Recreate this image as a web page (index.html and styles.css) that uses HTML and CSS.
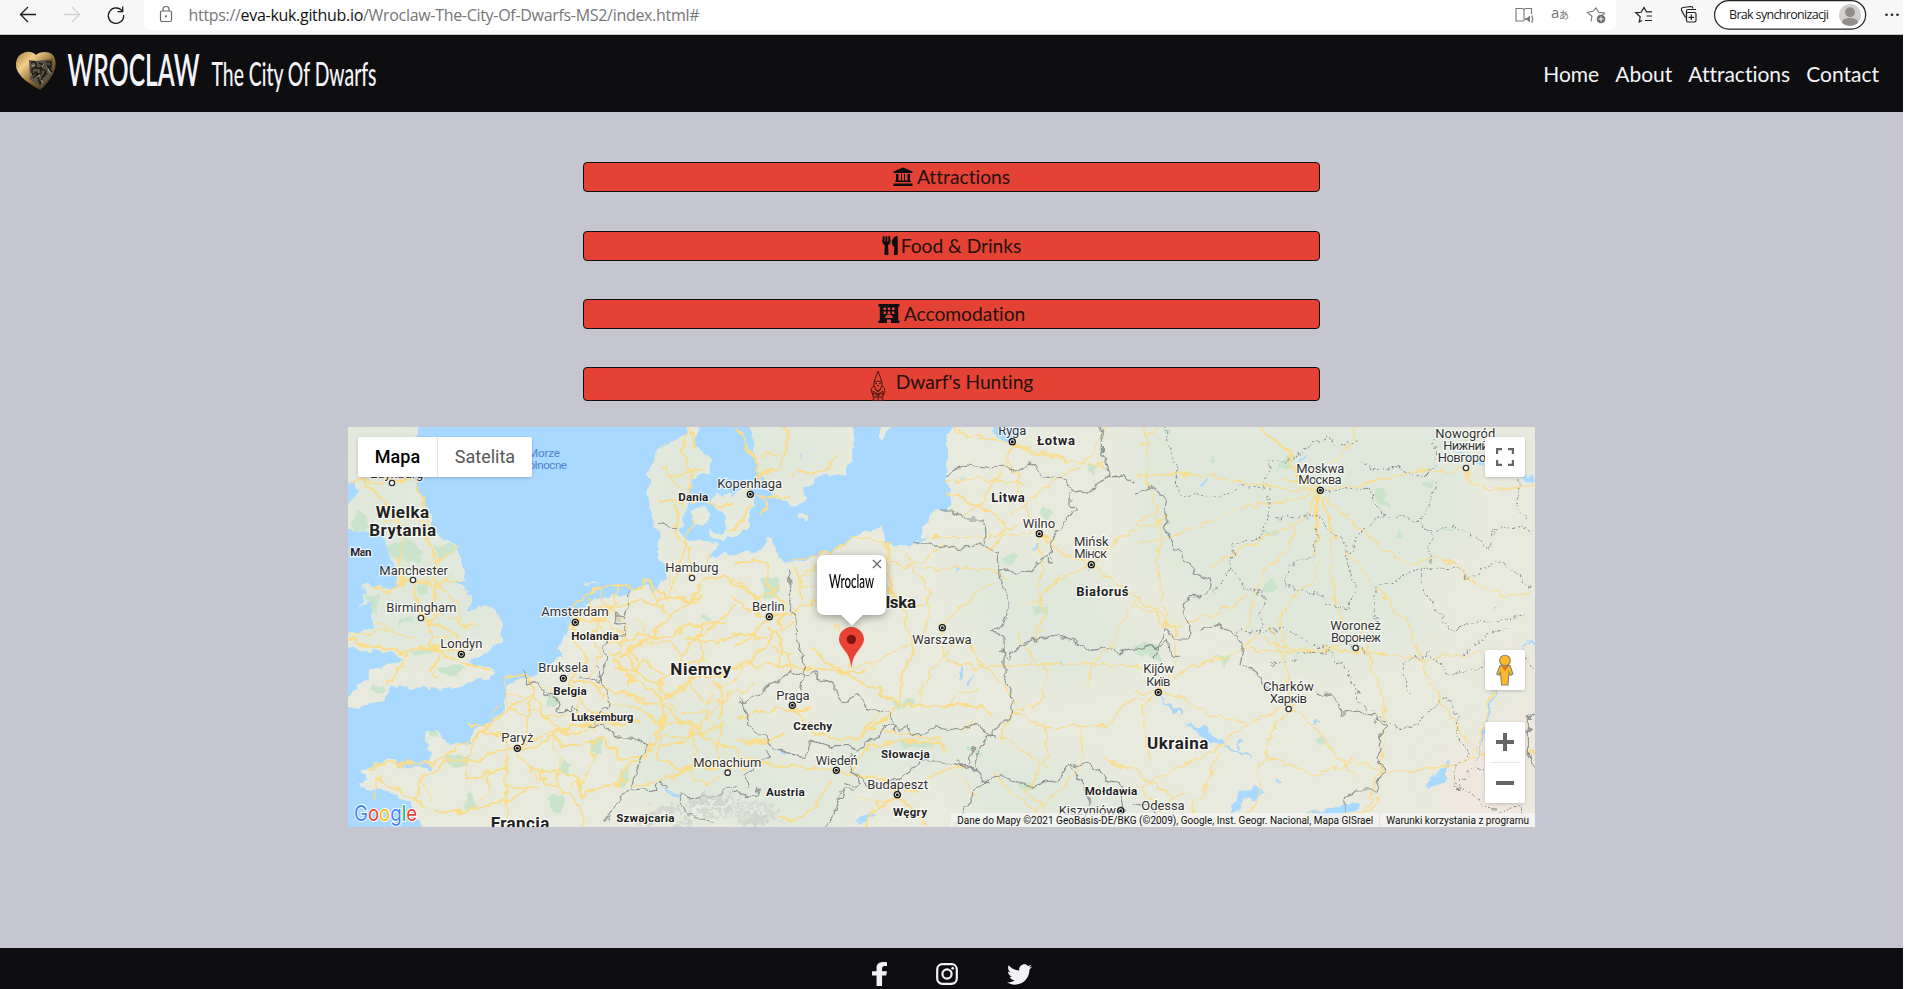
FILE: index.html
```html
<!DOCTYPE html>
<html lang="en">
<head>
<meta charset="utf-8">
<title>Wroclaw The City Of Dwarfs</title>
<link rel="stylesheet" href="styles.css">
</head>
<body>
<div class="browser">
  <svg class="browser-nav" width="144" height="34" viewBox="0 0 144 34" fill="none" stroke="#1b1b1b" stroke-width="1.3">
    <path d="M36 14.5H20.5M28 7l-7.5 7.5L28 22"/>
    <path d="M64 14.5h15.500M72 7l7.500 7.500L72 22" stroke="#cfcfcf"/>
    <path d="M122.500 11.500A7.700 7.700 0 1 0 123.700 15M122.700 6.500v5.200h-5.200"/>
  </svg>
  <div class="address">
    <svg width="1476" height="30" viewBox="144 0 1476 30">
      <g fill="none" stroke="#666" stroke-width="1.200"><rect x="160.500" y="11" width="11" height="10.500" rx="1.500"/><path d="M163 11V9a3 2.500 0 0 1 6 0v2"/></g>
      <circle cx="166" cy="16.300" r="1" fill="#555"/>
      <text class="url" x="188.500" y="21" textLength="511">https://<tspan class="url-host">eva-kuk.github.io</tspan>/Wroclaw-The-City-Of-Dwarfs-MS2/index.html#</text>
      <g fill="none" stroke="#767676" stroke-width="1.100"><path d="M1523.500 21h-7.500V8.500h6q2 0 2 2V21M1524 10.500q0-2 2-2h5.500V14"/><path d="M1591 21.500l1-5.200-4.700-4 5.700-1L1596 8l2.500 4.300 6 .8-3 3"/></g>
      <path d="M1525 18h2l3-2.500v7l-3-2.500h-2z" fill="#767676"/><path d="M1531.500 16q2 3 0 6M1532 15q2 4 0 8" fill="none" stroke="#767676" stroke-width=".8"/>
      <text class="translate" x="1551" y="18">a</text><text class="translate kana" x="1559" y="19">あ</text>
      <circle cx="1601" cy="19" r="4.300" fill="#6b6b6b"/><path d="M1598.500 19h5M1601 16.500v5" stroke="#fff"/>
    </svg>
  </div>
  <svg class="browser-tools" width="285" height="34" viewBox="1620 0 285 34" fill="none" stroke="#222" stroke-width="1.200">
    <path d="M1642 20.500l-2.700 1.400.9-5.200-4.500-3.900 5.400-.5L1644 7.500l2.500 4.300h5.500M1646.500 16h5.500M1645 20.500h7"/>
    <path d="M1685.500 17.500q-3-5-4-7.500-.5-2 1.500-2.500l8-1q1.700 0 2 1.800M1686.500 18.500V11q0-1.500 1.500-1.500h8"/>
    <rect x="1686.500" y="12.500" width="9.500" height="9.500" rx="1.500" fill="#f7f7f7"/><path d="M1688.500 17.300h5.500M1691.300 14.500V20"/>
    <rect class="pill" x="1714.600" y=".6" width="151" height="28.500" rx="14.200"/>
    <circle cx="1850" cy="15" r="11" fill="#d2d0ce" stroke="none"/><circle cx="1850" cy="12.300" r="5" fill="#918e8b" stroke="none"/><path d="M1842 23q0-5 8-5t8 5q-4 3-8 3t-8-3z" fill="#918e8b" stroke="none"/>
    <g fill="#222" stroke="none"><circle cx="1886.500" cy="14.800" r="1.300"/><circle cx="1892" cy="14.800" r="1.300"/><circle cx="1897.500" cy="14.800" r="1.300"/></g>
    <text class="sync" x="1729" y="19" textLength="100">Brak synchronizacji</text>
  </svg>
</div>

<header class="site-header">
  <svg class="brand" width="390" height="77" viewBox="0 35 390 77">
    <defs>
      <linearGradient id="gold" x1="0" y1="0" x2="1" y2="1"><stop offset="0" stop-color="#a77c3d"/><stop offset=".28" stop-color="#f0cf8c"/><stop offset=".55" stop-color="#94713d"/><stop offset="1" stop-color="#15100a"/></linearGradient>
    </defs>
    <path d="M36 55q-4-4-10-3-9 2-10 11-1 9 10 18 7 5 14 9 8-6 13-16 4-9 2-15-2-7-10-7-6 0-9 3z" fill="url(#gold)"/>
    <path d="M29 60l7 1 17-2-1 15-11 14-11-9z" fill="#5a5446"/>
    <path d="M31 63q4-3 5 1t-4 5v6l4-3 3 8M39 63l5 2-4 3 6 3-3 6 4-4M46 62h5v5l-4-2 5 7M33 78l4-4 3 10 3-9M36 69q4-3 5 2t-4 2" fill="none" stroke="#1f1c17" stroke-width="1.500"/>
    <path d="M32 66l3-1M37 77l3-2M42 67l2-3M48 69l2 4M41 80l2 3M31 73v3" stroke="#b5aa8d" stroke-width="1"/>
    <text class="logo-main" x="67.500" y="86" textLength="132" lengthAdjust="spacingAndGlyphs">WROCLAW</text>
    <text class="logo-sub" x="211.500" y="85.500" textLength="165" lengthAdjust="spacingAndGlyphs">The City Of Dwarfs</text>
  </svg>
  <nav class="menu"><a>Home</a><a>About</a><a>Attractions</a><a>Contact</a></nav>
</header>

<main class="content">
  <div class="filters">
    <button class="filter"><svg width="20" height="20" viewBox="0 0 20 20"><path d="M10 0.500L19.500 4.500V6H.5V4.500zM3 7h2.500v6.500h2.500V7h1v6.500h2V7h1v6.500h2.500V7H17v6.500h.8V15H2.200v-1.500H3zM.5 16.500h19v2.500H.5z"/></svg><span>Attractions</span></button>
    <button class="filter food"><svg width="16" height="19" viewBox="0 0 416 512"><path d="M207.900 15.200c.8 4.700 16.100 94.500 16.100 128.800 0 52.300-27.800 89.600-68.900 104.600L168 486.700c.7 13.700-10.200 25.300-24 25.300H80c-13.700 0-24.700-11.500-24-25.300l12.900-238.100C27.700 233.600 0 196.200 0 144 0 109.600 15.300 19.900 16.100 15.200 19.300-5.100 61.400-5.400 64 16.300v141.200c1.300 3.400 15.100 3.200 16 0 1.400-25.300 7.900-139.200 8-141.800 3.300-20.800 44.700-20.800 47.900 0 .2 2.700 6.600 116.500 8 141.800.9 3.200 14.800 3.400 16 0V16.300c2.600-21.600 44.800-21.400 48-1.100zm119.200 285.700l-15 185.100c-1.200 14 9.900 26 23.900 26h56c13.300 0 24-10.700 24-24V24c0-13.200-10.700-24-24-24-82.500 0-221.400 178.500-64.900 300.900z"/></svg><span>Food &amp; Drinks</span></button>
    <button class="filter hotel"><svg width="22" height="19" viewBox="0 0 22 19"><path fill-rule="evenodd" d="M.5 0h21v2.500h-1.300v14h1.300V19H13v-3.500H9V19H.5v-2.500h1.300v-14H.5zM5.500 3.500v2.500H8V3.500zm4.200 0v2.500h2.600V3.500zm4.300 0v2.500h2.500V3.500zm-8.500 4v2.500H8V7.500zm4.200 0v2.500h2.600V7.500zm4.300 0v2.500h2.500V7.500zM7 14h8q-.5-3.500-4-3.500T7 14z"/></svg><span>Accomodation</span></button>
    <button class="filter dwarf"><svg width="16" height="31" viewBox="0 0 16 31" fill="none" stroke="#4a1712" stroke-width="1"><path d="M4 12L8 1l4 11q-4-2-8 0zM4 12v3q1 5 4 6 3-1 4-6v-3M5 13.500h2M9 13.500h2M7 15.500h2M4 16q-3 1-3 5l2 4M12 16q3 1 3 5l-2 4M3 21l5 3 5-3M3 21v6h10v-6M2 24h12M8 24v6M4 27v2l-2 1.500h5.500M12 27v2l2 1.500H8.500M5 19l3 3 3-3M6 25h4"/></svg><span>Dwarf's Hunting</span></button>
  </div>

  <section class="map">
    <svg class="map-canvas" width="1187" height="400" viewBox="24 21 3561 1200">
      <defs>
        <filter id="natural" filterUnits="userSpaceOnUse" x="0" y="0" width="3600" height="1240" color-interpolation-filters="sRGB"><feTurbulence type="fractalNoise" baseFrequency=".03" numOctaves="2" seed="4" result="n"/><feDisplacementMap in="SourceGraphic" in2="n" scale="34" xChannelSelector="R" yChannelSelector="G"/></filter>
        <filter id="soft" x="-10%" y="-10%" width="120%" height="120%"><feGaussianBlur stdDeviation="30"/></filter>
        <filter id="relief" filterUnits="userSpaceOnUse" x="700" y="1050" width="800" height="250" color-interpolation-filters="sRGB"><feGaussianBlur stdDeviation="3" result="b"/><feTurbulence type="fractalNoise" baseFrequency=".05" numOctaves="2" seed="9"/><feDisplacementMap in="b" scale="80" xChannelSelector="R" yChannelSelector="G"/></filter>
      </defs>
      <rect x="24" y="21" width="3561" height="1200" fill="#e7eadc"/>
      <!-- terrain tints -->
      <g fill="#e0e8dc" filter="url(#soft)">
        <path d="M24 21h210v180l80 160 170 200v80l-200 50-260-20z"/>
        <path d="M1190 21h310l-30 140-130 60-100-20zM930 50h180v260l-160 40zM1850 400l400 60 160 260-300 70-200-160z"/>
        <path d="M2385 21h1000v300l-200 220 100 100-400 100-300-200-200-120zM840 820l400 60 120 220-300 100-160-100zM1200 1110l270-60 30 170h-300zM1480 900l360 40 30 90-380 60zM1900 970l300 70 300 170h-620z"/>
        <path d="M3280 1020l120-60 185-140v400h-260zM3440 720l145-60v160z" fill="#f0e8df"/>
      </g>
      <g filter="url(#natural)">
      <!-- woods -->
      <g fill="#c9e4cb">
        <path d="M45 275l40 20 10 30-40 10-20-20zM140 375l60-20 45 40-10 35-50-10-40-20zM275 380l60-10 15 25-50 25zM230 500l30-8 8 22-30 10zM80 520l35 15-5 50-25-10zM180 590l40-3-8 25-30-5zM210 700l65-25 5 20-60 15zM90 790l40 5-5 30-35-10zM290 740l70-5 25 15-60 20zM265 930l20-5 8 30-20 5zM310 1010l80-10-5 35-50 5zM90 1025l40-8-5 22-30 10zM370 1140l25-20 15 40-30 15zM625 1130l50-5-10 55-30-10zM620 825l35 5-10 30-30-10zM665 1025l30 10-5 20-30-3zM750 960l30-3 8 40-30 5zM840 1060l30-25-10 50-25 20zM940 70l35-20 10 20-30 30zM1080 590l30 5-5 10z"/>
        <path d="M1270 480l40-10 5 60-45 10zM1430 350l60-15-30 25zM1645 850l70-15 5 15-45 15zM1680 960l90 5 20 20-100-5zM1890 980l40 10-5 15-40-15zM2030 1080l50 10-10 25-30-8zM2240 130l35 5-10 30-25-10zM2110 260l30 15-12 20-28-20zM1990 410l35-15 5 20-30 20zM2080 560l40-3-3 25-45-5zM1860 170l15 8-12 8z"/>
        <path d="M2820 125l45-20-10 40-50 5zM3105 208l25 3 15 50-35-20zM2760 330l60 5-10 12-40-5zM2777 490l25-15 8 30-20 20-20-10zM3250 190l30-10-15 25-20 3zM3310 325l35-5-15 15zM2385 675l65-5 15 55-30-5-45-20zM2625 715l50-10-20 30zM2925 960l20-8 20 8-30 10zM3170 345l15-8v25l-20-8zM2470 30l20 0-10 15zM2610 115l15-5v15zM2610 510l20-5v15z"/>
      </g>

      <!-- seas -->
      <g class="water">
        <path d="M242 -10l-12 61-50 30-48 14 20 55 52 22 38 50 20 60 18 20-2 20 25 25 45 30 10 30 5 15 15 60-40-5 48 30 13 40-20 25 15 2 45-13 35 15 15 35-7 60-38 25-50 20 1 15 60 12 7 17-40 18-50 20-70 8-25-8-10 8-90-8-28 12-15 32-45 8-80 18v401h246l-22-75-28-42-40-25-50-20-45 5-13-25 27-12-25-22 45-25 60-10 12 17 90 10 7-50-20-60 40-4 8 28 57 18 35-5-3-30 60-38 40-28 7-77 60-22 50-25 62-45-15-20 20-35 22-45-5-35 25 5 45-38 80-14 12 4 28-27 45-3 12 18 25-40 15 5 5-35-30-50-8-25 15-30-37-90 5-100 30-70 85-36V-10z"/>
        <path d="M10 190l36-10 4 40-40 60zM10 325l76 12 42 12 18 40 15 50 15 32-8 30-50 3-58-15 22 36-32 32 45-10-5 40 10 35-90 28zM10 675l74 20 90 6 12 8-40 27-60 11-8 33-68 55z"/>
        <path d="M1095 -10l-32 81 52 52-15 32-35 18-15 55-10 50-15 30-5 25 45 28 62 5-15 45 85-12 60-2 42-48-5 25 45 57 60-13 78-30 72-45 75-20 15 50 60 8 45-30v-40l20-5 12-35 40 0 10 5 5-43-12-72-2-68 7-50 18-30V-10h-165l-20 30-30 43-10-25-5-48h-65l-5 95-25 75-35 5-60 8-25 30 5 37-50 18-50-25-10-20-40-58-15-90-7-75z"/>
        <path d="M1958 -10v57l43 20 42-18 16-59z"/>
        <path d="M1735 355l35-12-5 12-35 20z"/>
      </g>
      <g fill="#e6eadc"><path d="M1120 222l40 8 45-25 42 20-15 40-15 70-25 18-48-5 8-40 8-20-35-20zM1050 268l48-8 12 35-20 20-35-8zM1540 0l-10 71-22 82-14-22 12-65 8-66zM1378 273l28 13-5 20-24-14zM1110 365l20 0 8 10-20 8zM190 915l8 4-6 3zM1110 335l50 15-10 10-40-10zM730 488l50-6v4l-50 8zM1280 350l20 5-5 15-15-5z"/></g>

      <!-- lakes and rivers -->
      <g class="water">
        <path d="M1550 1200l50-27 15 3-45 28zM960 1100l65 25-10 8-40-20zM1288 1105l12 10-5 10zM1600 225l3-10-2 12zM1380 100l8-5-3 18zM2085 370l10 5-8 15zM2230 445l15 5-5 8zM1848 442l16 5-12 10z"/>
        <path d="M2540 905l60 20 50 40-10 10-30-10-35-25zM2690 1110l80-5 10 15-65 20-20 40-30 10 20-40zM2900 1180l150-35 5 20-50 25-80 5zM3310 1040l20-20-15 65-50 20-10-10zM3490 725l5 30-25 45-20 20 20-60zM2875 115l30-15-5 12-25 15zM3550 155l35 30-12 5-25-20zM3565 660l25 5-20 20zM2580 195l15-15-5 20zM3180 385l10 8-5 6zM3455 560l15-3-8 12zM3345 90l30 10 150 40-40 2-60-10z"/>
      </g>
      <g fill="none" stroke="#a5d4fb" stroke-width="5"><path d="M2465 830l15 25 20 15 20-5v20M2650 975l40 20 40 15 5 10M3470 800l-15 70-20 50-15 70-15 30M3530 700l20-25 30-5M1862 730l5 50M1900 770l-20 25M2160 720l10 20M1308 980l30 25M2700 960l-8 30M2935 900l-5 20M2810 1075l10 20M2900 275l5 30"/></g>

      <!-- motorways -->
      <g class="road wide">
        <path d="M65 180l30 30 40 40 40 60 15 50-10 60-5 50 40 20 15 50 30 60M105 160l120 30 30 60 10 60 0 70 20 40 0 60 5 60-15 70M95 505l50 10 60-30 80 10 70-20M110 100l-50 90M165 490l60-5 40-10"/>
        <path d="M24 655l70 30 110 10 50-15 100 15 45-20M230 560l25 40 70 20 20 35M270 600v80l30 15 60 30 90 25M200 700l-20 40-35 60M300 705l-25 50 20 20"/>
        <path d="M80 1050l60-20 60 0 80 0 60-40 90-50 60 0 15 40 85 0 80-50 60-20 90-35M250 1070l80-50 50 5 120-40 35-10 100-40 60-15 80-10 70 0 60-5M385 915l60 0 40-30 40-30 50-30 20 25 40 60 50 30 60-10M485 770l80 0 15 60-20 60 0 70M500 1000v170l10 50M385 1080l115-40M250 1070l-30 80M385 1080l-5-70 30-60 40-35M530 1000l50 50 60 50 60 30 30 60 0 30M600 1060l60-10 50 20 20 60 60-30 80-30M640 940l30 40 120-20M570 1100l-60 40-120 30-110 10M110 1070l80 50 70 40M790 960l60 60 50-10"/>
        <path d="M700 560l60-55 80-10 60 10 20-25 60 55 80 0 30-60 80 0 80 60 60-30M715 600l80 0 30-70 10-35M680 630l60-60 80-10 60-20 60 10 40-20 90 20M700 640l80 10 60 20 60-30 80 10 90-40 90 0M700 560l0 100 50 60-60 60 20 50 60 60M840 720l30-40 60-30 50-50 50-40 50-30M850 700l50 60 100 70 50-40 40-80-10-100M860 770l60 30 50 50-10 100-10 60 60 30 60 0M970 840l80-60 70-10 90-30M700 780l80 20 60 20 110 30M1060 300l-20 60-20 80-20 60M1010 250v100l40 40v80M950 240h130l60 20 45 -10M1040 40l-15 60 30 60 5 40-30 50M965 140l30 40 30 30M985 170l100-20M1050 21l15 60"/>
        <path d="M1190 21l30 70 30 20 0 60-30 50M1250 170l60-20 30-60 0-69M1250 225l100 10M1260 230l30 30-30 20M1360 160l100-5 30-60M1230 250l-30 60-30 20"/>
        <path d="M1190 1000l-80-40-60-50-90 0-90-60M1290 590l-60-20-50-40M1290 590l60 0 40-40 90-10 60-5 100 10 120 10M1290 590l-60 60-40 30M1290 620l40 60-20 60M1185 430l60-10 40 10 0 60 50 80-20 60 60-30M1360 440l30 40-10 60M1290 680l60 20 0 60M1190 730l180 10 140 20 60-10M1535 770l80 40 30 30 80 20 200-3 30 25M1535 770l-60-30-60-60M1650 440l0 60 40 80 30 90-10 40-30 70-5 70-40 50-60 40M1645 370l0 70M1190 900l80-30 80 0 60-5M1360 860l60 80 80 20 60-10 60-70M1330 940l-60 30-80-10M1490 1050l-60-5-60-5-70 0-60-20-60-20M1490 1050l60 20 70 0 60 60M1530 1055l60-80 60-10 80 0 90 5M1470 1080l-40 80-60 40-60-10M1680 1130l60 60 20 30M1680 1130l-80 40-30 50M1700 1120l90-60 80-20"/>
        <path d="M820 640l20 40-15 40 30 30 60-20 60 30M810 700l50 10 30-40 50 0M830 740l40 20-10 40M860 680l40 60-30 40M1190 560l-60 50-80 60-40 80-60 40M1040 650l90 20 70-30 80 10M970 860l80 60 20 100 60 30M960 780l10 110-30 70-20 60M1150 900l-20 90 40 60M1130 780l20 60-10 60M1300 640l-60 80-90 40M880 1100l100-20 90-50 90 10 60 0M1090 900l-40 60-90 20M920 1010l-60 30-30 60"/>
        <path d="M1815 215l60 20 70 40 50 30-10 50-40 40M2017 70l60 30 100 20M2050 245l15 50M2100 340l40 20M2940 200l-80-40-10-60-50-40-40-40M2930 215l-60-30-40-5M2935 230l-5 60v90l-10 30M2945 230l20 60 10 50 20 20M3370 150l20 25M2480 600l20 20h-30z"/>
      </g>
      <!-- main roads -->
      <g class="road">
        <path d="M40 180l80 10 40-20M130 300l80-5 60 10M270 440l60-40 30-20M190 490l-20-80M290 490l60 60 10 60 50 0M260 575l60 15 70 30M24 640l60 5 70-20M110 600l50 40 60 15M345 640l-60 20M480 850l-40 60M485 780l20 80 60 30M490 825l50 0M565 1040l30 50M500 1100l100 10M440 1050l10 60-60 60M120 1060l-20 80M250 1080l30 60M640 950l20 90-10 60M770 960l-20 100-60 40M850 1020l-60-60M560 780l70 30 60 20M560 870l80 20 60 0"/>
        <path d="M690 580l60 0 40 60M740 540l40 60-20 50M780 500l20 60 60 60-20 60M760 650l20 60-30 60 40 60M700 600l90-5 80 70M890 600l40 60 70 10 40 60 60-10M930 480l20 70 50 50M980 430l10 60-10 60M1110 400l-20 60M1185 470l60 60 40-10M1240 720l-60 60-70 30-10 90 60 30M1050 790l40 60 70-10 80-50M980 850l60 30 70 0 60-60M950 950l110 0 70-30M1050 1020l0 60 60 20 60-50M780 780l30 70 100 10M720 820l-10 60 60 60"/>
        <path d="M1240 110l80-10M1480 400l-80 60-40 40M1360 420l100-20 80-50 90 10 20 60 60 20 40-20 60-50M1380 500l60 0 60 30 100-10M1700 400l30 60 30 30 10 80-20 60-20 40M1530 770l0-100-50-60M1540 740l60-10 50-30 60-30M1750 450l80-10 120 10 60 30M1740 850l10-50 60-100 0-70M1800 620l60-60 60-50 40-20M1765 350l200 0 60-40M1815 190l80-10 100 0 60 10M1870 290l60-50 60-100 20-50M1990 350l110-10 60 60 80 20M2090 350l20 90-20 60 20 90-20 70"/>
        <path d="M2017 70l-10 60 30 30-10 80M2017 70l-120-20-70-29M2017 70l170 50 110 20M2300 21l-60 100-120 80-110 90M2254 434l60-60 80-50 90-30M2254 434l-90-40M2254 434l-100 40-50 60-60 30M2254 434l80 60 80 50 70 60M2450 21l-50 60M2240 800l10-60 60-60 40-80 40-60M1905 740l150-5 200-5 150 10M1905 740l-60-10-30-20 30-40 40-10 30 60 80 80 30 50M1830 860l30-40 60-10M2013 877l90-30 20-80-60-80-30-60M2013 877l-30 70 60 40 90 60M2013 877l100 40 80 0 100 0 70-70 40-10M2110 910l10 90-60 120 60 50M2220 920l10 80-50 100-100 70M1960 1060l90 90 80 40M1870 1080l40 60M2290 1020l90 30 120 80M1560 1130l80 30 40-40M1620 930l120 20 60 10 20 40M1900 900l-40 40"/>
        <path d="M2385 165l200 0 120 20 120 20 120 10M2940 215l-90 30-120 10-130 50-120 50-95 15M2940 215l-50 90-80 30-120 60-80 45M2870 320l-40 80-60 60-30 70-15 100M2935 410l-10 60-70 70-40 60 20 80M2975 350v110l10 100 30 60M2960 235l60 60 60 40 60 60 80 40 70-20 60 20 60 60 80 30 80-5M3020 400l80 90 60 80 40 20 20 60 40 120 130 210M2960 205l110-10 80-25 100-15 130-5 30 50 100 5 75-10M3050 21l-15 60-60 50M2420 21l0 160 30 70 15 80-10 100 10 100 20 80M2385 555l50 20 50 50M2510 620l60-20 100-40 50-40M2385 310l60-30"/>
        <path d="M2455 817l50-80 0-90 0-25M2385 820l70-3 80-70 150-40 60-60 100 40 150 0M2455 817l90 20 50 40 60 20 70 15 60-30 60-30M2455 817l-50 40 20 160M2715 690l180 5 180 0 160 20 50-5 140-10M2850 870l-60 70-10 70-30 40 10 60-30 70-70 50M2860 870l90 80 40 60 60 60M2860 870l-30-170-40-80M3060 600l30 120 40 120 10 110-20 100-20 60-30 80M2725 910l-100 80-120 60-120 60M2640 1000l-50 120-60 90M2785 1020l80 20 80 30M2950 1060l90-40 80 30 40 5 180-20 80-30 50-10M3405 1000l40-120 20-90-10-50M2940 1175l-60 20 60-5 150-10 30-60M3455 1005l130-10M2405 1110l60 60 60-60"/>
      </g>

      <!-- state borders -->
      <g class="border">
        <path d="M964 313l25 5 26 8M865 510l-5 60-10 25-20-10 0 25 25 5-5 30-20 0-45 35 12 40-5 30-20 30-20-10-20 8-10-5M545 745l15 50 30-10 20 30 20 10 20 10 8 40h30l10-20 12 25M770 735l20 70 20 30-5 20-25 35-20 30M742 915l50 5 40 30 60 10 40 15-30 40-20 60-5 40 70-10 15-15 15 10M885 1115l-35 5-40 60-20 30M1020 1140l10-20 30 20 30-15 40 0 60-30M1020 1140l20 40 30 10 50 20M1225 1100l-10-40 50-40 20 0 0-30M1260 1100l-10 30-70-15"/>
        <path d="M1800 270l40 0 40 30 50 0 8 40-8 40 45 20 0 20 12 70 20 50 0 50-50 40 35 20 0 90 0 20 20 50 5 50-5 30-60 50-45 60 10 55-70-30M1715 367l140 15 75-5M1820 165l60-30 100 10 60 5 30-20 40 40 60 10 30 40 60-15 50-40-20-60 0-50-10-34 20-20M2300 170l40 0 45 20M2190 220v40l20 5-30 40-25 20-20 20-5 60 10 20-15 5 0-15-40 20-40 25-65-5M1345 455l10 60-15 40 30 30 5 100 15 20 0 70-10 30M1195 850l60-30 90-60 10-10 20 15 15 5 30-15 20 20 45 15 0 30 20 25 50-20 30 40 60 20 20 50M1200 830l20 50 0 25 60 60 60 35 60 10 10-50 60 20 60 0 20 10 50-30 30-35 20-15 25 15 25-15 20 40 40-15 30-15 60 10 60-20 30 30 25 5M1535 1000l-10 20 30 70-15 20-30 0-30 80-20 30M1535 1050l50 50 70-10 60-40 40-30 60 0 30 20 30-10 30 20 40 40M1885 1030l20-50M1940 1075l30-5 60 10 30 20 90-20 50-45 40-10 40 30 30 30 30 10 15 80M2200 1045l30 50 20 60M1940 1075l-50 60-20 40-25 50M1510 1090l40 10"/>
        <path d="M1980 690l30 20 30-40 90-18 70 10 50 30 50-10 40 20 20-20 50 10 20-15 30 5 25-20 10 50 20 0M2385 220l50-20 50 40-10 90 30 50 50 60 5 20 50 20 10 30-40 20-30 0-20 30 20 60-5 40-40 0-20-30-30 40-10 50M2580 630l60-15 50 30 20 40-10 50 55 30 20 40 40 20M2930 820l30 0 50 60 40-10 50 20 10 15 30 15-30 35 20 30-20 30 20 25-15 70-65 0-35 30 0 40M3585 880l-20 10 0 110 20 40M2385 1150l60 15 5 50"/>
        <g stroke-dasharray="6 7"><path d="M2790 745l20-20 50 0 20-25 90-5 60 70 15 50 25 40 60 50 60 20 40-10 60-60 30-30 30 60 0 60 40 60-45 30v60l60 30 20 30 70 20 50-20 20 60M3210 825l-20-50 0-50 80-30 60 70 80-20 80-30 70-5 30 50M3355 1110l10-30 40-40 30 10"/>
        <path d="M2480 21l0 60 30 60 5 90 60-10 60 10 60-40 80 15 10-80 60 0 50-45 60-30 30 20 30 10 40-25M2790 205v90l-30 60-80 20-10 70-40 60M2670 440l40 60 60 20-5 80-10 50M2790 290l80 0 60-10 30 50 60 40 10 80 15 70-20 50-60-20-40-30-90-20 10-60 70-30 15-80M2940 215l140-10 50 80-80 60-20 60M3050 120l40 20 90 0 40 30 40-10 30-30-10-90M3230 310l30-50 30-70M3130 280l80 15 60 40 0 110 70 0 50 30 70-50 60 20 50 60M3270 330l70-15 60 40 50 30 15-60 80-10 40 20M3250 450v60l60 90 10 30 100-20 130-20M3105 610l0-110 60-20 60-30 40-5M2690 630l80 10 60-20 60 40 80 30 20-30 90 40M3370 700l80-60 60-20M3540 100l0 80-10 80 20 30 20 50"/></g>
      </g>
      </g>
      <!-- alpine relief -->
      <g fill="none" stroke="#c3c7c0" stroke-width="16" stroke-opacity=".55" filter="url(#relief)"><path d="M900 1215l70-50 60 10 60-40 80 10M1000 1220l60-20 50-30 70 10M1080 1150l60-20 40 10M1180 1150l60 10 70 10M1190 1170l60 20 60 0M1190 1200l90 5"/><path d="M1010 1185l50-10 60-20 60 5M1190 1160l100 15" stroke="#f1f3ef"/></g>

      <!-- place names -->
      <g class="label sea"><text x="660" y="110" text-anchor="end" textLength="96">Morze</text><text x="681" y="146" text-anchor="end" textLength="136">Północne</text></g>
      <g class="label city">
        <text x="170" y="174" textLength="160">Edynburg</text><text x="221" y="464" textLength="206">Manchester</text><text x="244" y="575" textLength="210">Birmingham</text><text x="364" y="683" textLength="126">Londyn</text><text x="1229" y="203" textLength="195">Kopenhaga</text><text x="1056" y="455" textLength="160">Hamburg</text><text x="705" y="588" textLength="202">Amsterdam</text><text x="670" y="755" textLength="150">Bruksela</text><text x="532" y="965" textLength="96">Paryż</text><text x="1162" y="1042" textLength="204">Monachium</text><text x="2017" y="46" textLength="84">Ryga</text><text x="2097" y="323" textLength="97">Wilno</text><text x="2254" y="377" textLength="104">Mińsk</text><text x="2252" y="415" textLength="98">Мінск</text><text x="1285" y="572" textLength="98">Berlin</text><text x="1806" y="671" textLength="178">Warszawa</text><text x="1359" y="840" textLength="100">Praga</text><text x="1490" y="1034" textLength="126">Wiedeń</text><text x="1673" y="1107" textLength="182">Budapeszt</text><text x="2242" y="1185" textLength="172">Kiszyniów</text><text x="3376" y="53" textLength="180">Nowogród</text><text x="3378" y="90" textLength="136">Нижний</text><text x="3376" y="127" textLength="166">Новгород</text><text x="2941" y="158" textLength="144">Moskwa</text><text x="2940" y="193" textLength="130">Москва</text><text x="3047" y="631" textLength="152">Woroneż</text><text x="3048" y="667" textLength="150">Воронеж</text><text x="2456" y="760" textLength="92">Kijów</text><text x="2455" y="799" textLength="72">Київ</text><text x="2845" y="812" textLength="152">Charków</text><text x="2845" y="850" textLength="112">Харків</text><text x="2469" y="1171" textLength="130">Odessa</text>
      </g>
      <g class="label country">
        <text x="63" y="407" textLength="64">Man</text><text x="1060" y="243" textLength="90">Dania</text><text x="765" y="660" textLength="143">Holandia</text><text x="690" y="825" textLength="101">Belgia</text><text x="787" y="902" textLength="187">Luksemburg</text><text x="916" y="1206" textLength="175">Szwajcaria</text><text x="1418" y="931" textLength="117">Czechy</text><text x="1696" y="1014" textLength="146">Słowacja</text><text x="1336" y="1129" textLength="116">Austria</text><text x="1710" y="1187" textLength="102">Węgry</text><text x="2313" y="1125" textLength="158">Mołdawia</text>
      </g>
      <g class="label country medium"><text x="2148" y="76" textLength="114">Łotwa</text><text x="2004" y="247" textLength="100">Litwa</text><text x="2287" y="527" textLength="156">Białoruś</text></g>
      <g class="label country large"><text x="187" y="294" textLength="160">Wielka</text><text x="188" y="349" textLength="200">Brytania</text><text x="1082" y="765" textLength="182">Niemcy</text><text x="540" y="1228" textLength="176">Francja</text><text x="1653" y="564" textLength="150">Polska</text><text x="2513" y="988" textLength="184">Ukraina</text></g>

      <g fill="#fff" stroke="#333" stroke-width="4"><circle cx="156" cy="189" r="8"/><circle cx="219" cy="480" r="8"/><circle cx="243" cy="594" r="8"/><circle cx="1056" cy="474" r="8"/><circle cx="1163" cy="1058" r="8"/><circle cx="3378" cy="144" r="8"/><circle cx="3047" cy="684" r="8"/><circle cx="2846" cy="867" r="8"/></g>
      <defs><g id="capital"><circle r="9" fill="#fff" stroke="#111" stroke-width="4"/><circle r="4.500" fill="#111"/></g></defs>
      <use href="#capital" x="706" y="607"/><use href="#capital" x="364" y="703"/><use href="#capital" x="670" y="775"/><use href="#capital" x="532" y="985"/><use href="#capital" x="1231" y="223"/><use href="#capital" x="1288" y="590"/><use href="#capital" x="1807" y="623"/><use href="#capital" x="2017" y="65"/><use href="#capital" x="2098" y="341"/><use href="#capital" x="2254" y="434"/><use href="#capital" x="1357" y="856"/><use href="#capital" x="1489" y="1051"/><use href="#capital" x="1672" y="1124"/><use href="#capital" x="2342" y="1172"/><use href="#capital" x="2941" y="211"/><use href="#capital" x="2455" y="817"/>

      <!-- marker -->
      <path d="M1534 744c-4-34-12-42-24-58-9-11-13-18-13-28 0-20 16-37 37-37s38 17 38 37c0 10-5 17-13 28-12 16-21 24-25 58z" fill="#ea4335"/><circle cx="1534" cy="658" r="14" fill="#811411"/>
    </svg>

    <svg class="google" width="66" height="24" viewBox="0 0 66 24"><text x="0" y="17.500" textLength="63" lengthAdjust="spacingAndGlyphs"><tspan fill="#4285f4">G</tspan><tspan fill="#ea4335">o</tspan><tspan fill="#fbbc05">o</tspan><tspan fill="#4285f4">g</tspan><tspan fill="#34a853">l</tspan><tspan fill="#ea4335">e</tspan></text></svg>
    <div class="map-type"><span class="on">Mapa</span><span class="off">Satelita</span></div>
    <div class="control fullscreen"><svg width="18" height="18" fill="none" stroke="#666" stroke-width="2.200"><path d="M1.100 6V1.100H6M12 1.100h4.900V6M16.900 12v4.900H12M6 16.900H1.100V12"/></svg></div>
    <div class="control pegman"><svg width="18" height="32" viewBox="0 0 18 32" stroke="#8a8373" stroke-width="1.100" fill="#fbb929"><path d="M4 11.500h10l3 8.500-2.500 1.200-1.500-3-1 12.800H5.500l-1-12.800-1.500 3L.8 20z"/><circle cx="9" cy="6.500" r="5.300"/><path d="M5 12l4 5 4-5z" fill="#e4762d" stroke="none"/></svg></div>
    <div class="control zoom"><svg width="40" height="81" fill="none" stroke="#666" stroke-width="4"><path d="M11 20h18M20 11v18M11 61h18"/><path d="M5 40.500h30" stroke="#e6e6e6" stroke-width="1"/></svg></div>
    <div class="info"><svg width="69" height="71" viewBox="0 0 69 71"><path d="M8 0h53q8 0 8 8v44q0 8-8 8H46L35 70.500 24 60H8q-8 0-8-8V8q0-8 8-8z" fill="#fff"/><path d="M56 5l8 8M64 5l-8 8" stroke="#666" stroke-width="1.300"/><text x="12" y="32.500" textLength="45" lengthAdjust="spacingAndGlyphs">Wroclaw</text></svg></div>
    <div class="legal"><span>Dane do Mapy ©2021 GeoBasis-DE/BKG (©2009), Google, Inst. Geogr. Nacional, Mapa GISrael</span><span>Warunki korzystania z programu</span></div>
  </section>
</main>

<footer class="site-footer">
  <svg width="15" height="24" viewBox="22 0 272 512" preserveAspectRatio="none"><path d="M279.140 288l14.220-92.660h-88.910v-60.130c0-25.350 12.420-50.060 52.240-50.060h40.420V6.260S260.430 0 225.360 0c-73.220 0-121.080 44.380-121.080 124.720v70.620H22.890V288h81.390v224h100.170V288z"/></svg>
  <svg width="22" height="22" viewBox="0 0 22 22"><rect x="1.200" y="1.200" width="19.600" height="19.600" rx="5.200" fill="none" stroke="#f2f2f4" stroke-width="2.200"/><circle cx="11" cy="11" r="4.600" fill="none" stroke="#f2f2f4" stroke-width="2.200"/><circle cx="16.700" cy="5.300" r="1.400"/></svg>
  <svg width="25" height="25" viewBox="0 0 512 512"><path d="M459.370 151.716c.325 4.548.325 9.097.325 13.645 0 138.720-105.583 298.558-298.558 298.558-59.452 0-114.680-17.219-161.137-47.106 8.447.974 16.568 1.299 25.340 1.299 49.055 0 94.213-16.568 130.274-44.832-46.132-.975-84.792-31.188-98.112-72.772 6.498.974 12.995 1.624 19.818 1.624 9.421 0 18.843-1.300 27.614-3.573-48.081-9.747-84.143-51.980-84.143-102.985v-1.299c13.969 7.797 30.214 12.670 47.431 13.319-28.264-18.843-46.781-51.005-46.781-87.391 0-19.492 5.197-37.360 14.294-52.954 51.655 63.675 129.300 105.258 216.365 109.807-1.624-7.797-2.599-15.918-2.599-24.040 0-57.828 46.782-104.934 104.934-104.934 30.213 0 57.502 12.670 76.670 33.137 23.715-4.548 46.456-13.320 66.599-25.340-7.798 24.366-24.366 44.833-46.132 57.827 21.117-2.273 41.584-8.122 60.426-16.243-14.292 20.791-32.161 39.308-52.628 54.253z"/></svg>
</footer>
</body>
</html>
```

FILE: styles.css
```css
* { box-sizing: border-box; }
html { background: #fff; overflow: hidden; }
body {
  margin: 0;
  width: 1903px;
  height: 989px;
  display: flex;
  flex-direction: column;
  background: #c6c6d0;
  font-family: Lato, sans-serif;
  font-variant-ligatures: none;
  color: #0e0e10;
}
svg { display: block; flex: none; }

.browser {
  display: flex;
  width: 1905px;
  height: 35px;
  background: #f7f7f7;
  border-bottom: 1px solid #c4c7c9;
}
.address { width: 1472px; height: 30px; overflow: hidden; background: #fff; border-radius: 0 0 5px 5px; }
.browser-tools { margin-left: 4px; }
.url { font: 16px "Open Sans", sans-serif; fill: #767676; }
.url-host { fill: #111; }
.translate { font: 15px "Open Sans", sans-serif; fill: #767676; }
.kana { font: 10px "Noto Sans CJK JP", sans-serif; }
.sync { font: 12.500px "Open Sans", sans-serif; fill: #1b1b1b; stroke: none; }
.pill { fill: #fff; }

.site-header {
  display: flex;
  justify-content: space-between;
  height: 77px;
  background: #0e0e10;
}
.logo-main { font: 600 44px Lato, sans-serif; fill: #f4f4f8; }
.logo-sub { font: 500 32px Lato, sans-serif; fill: #f4f4f8; }
.menu { display: flex; gap: 16px; padding: 26px 24px 0 0; font-size: 21px; line-height: 26px; color: #f4f4f8; }

.content { flex: 1; }
.filters { display: flex; flex-direction: column; width: 737px; margin: 50px 0 0 583px; }
.filter {
  display: flex;
  justify-content: center;
  gap: 4px;
  height: 30px;
  margin-bottom: 39px;
  padding: 3px 0 0;
  background: #e44235;
  border: 1px solid #0e0e10;
  border-radius: 4px;
  font: 400 19.200px/22px Lato, sans-serif;
  font-variant-ligatures: none;
  color: #24100f;
}
.filter svg { fill: #0e0e10; margin-top: 1px; }
.food, .hotel { margin-bottom: 38px; }
.food { gap: 3px; }
.dwarf { height: 34px; margin-bottom: 26px; padding-top: 2px; gap: 10px; }
.dwarf svg { fill: none; margin-top: 0; }
.dwarf span { margin-top: 1px; }

.map { position: relative; width: 1187px; height: 400px; margin-left: 348px; overflow: hidden; }
.water { fill: #a9d9ff; }
.road { fill: none; stroke: #fbdc8b; stroke-width: 4; stroke-linejoin: round; }
.wide { stroke-width: 6.500; }
.border { fill: none; stroke: #8f938f; stroke-width: 3.500; stroke-linejoin: round; }
.label { font-family: Roboto, sans-serif; paint-order: stroke; stroke: #fff; stroke-width: 7; stroke-opacity: .75; text-anchor: middle; }
.city { font-size: 39px; fill: #333; }
.country { font-size: 35px; font-weight: 700; fill: #222; }
.medium { font-size: 39px; }
.large { font-size: 51px; }
.sea { font-size: 35px; fill: #4f86cf; stroke: none; }

.google { position: absolute; left: 6px; bottom: 0; font: 22px Inter, sans-serif; paint-order: stroke; stroke: #fff; stroke-width: 2; }
.map-type {
  position: absolute;
  left: 10px;
  top: 10px;
  display: flex;
  height: 40px;
  background: #fff;
  border-radius: 2px;
  box-shadow: 0 1px 4px -1px rgba(0, 0, 0, .3);
  font: 18px/40px Roboto, sans-serif;
  text-align: center;
}
.on { width: 80px; font-weight: 500; color: #000; border-right: 1px solid #e6e6e6; }
.off { width: 94px; color: #565656; }
.control {
  position: absolute;
  right: 10px;
  display: flex;
  justify-content: center;
  align-items: center;
  width: 40px;
  height: 40px;
  background: #fff;
  border-radius: 2px;
  box-shadow: 0 1px 4px -1px rgba(0, 0, 0, .3);
}
.fullscreen { top: 10px; }
.pegman { top: 223px; }
.zoom { top: 295px; height: 81px; }
.info { position: absolute; left: 469px; top: 128px; font: 500 20px Lato, sans-serif; filter: drop-shadow(0 2px 4px rgba(0, 0, 0, .35)); }
.legal { position: absolute; right: 0; bottom: 0; display: flex; height: 14px; font: 10px/15px Roboto, sans-serif; color: #111; white-space: nowrap; }
.legal span { padding: 0 6px; background: rgba(245, 245, 245, .75); }
.legal span + span { border-left: 1px solid rgba(0, 0, 0, .08); }

.site-footer {
  display: flex;
  justify-content: center;
  height: 41px;
  padding-top: 14px;
  background: #0e0e10;
  fill: #f2f2f4;
  gap: 49px;
}
.site-footer svg + svg { margin-top: 1px; }
.site-footer svg + svg + svg { margin-top: 0; }
```
